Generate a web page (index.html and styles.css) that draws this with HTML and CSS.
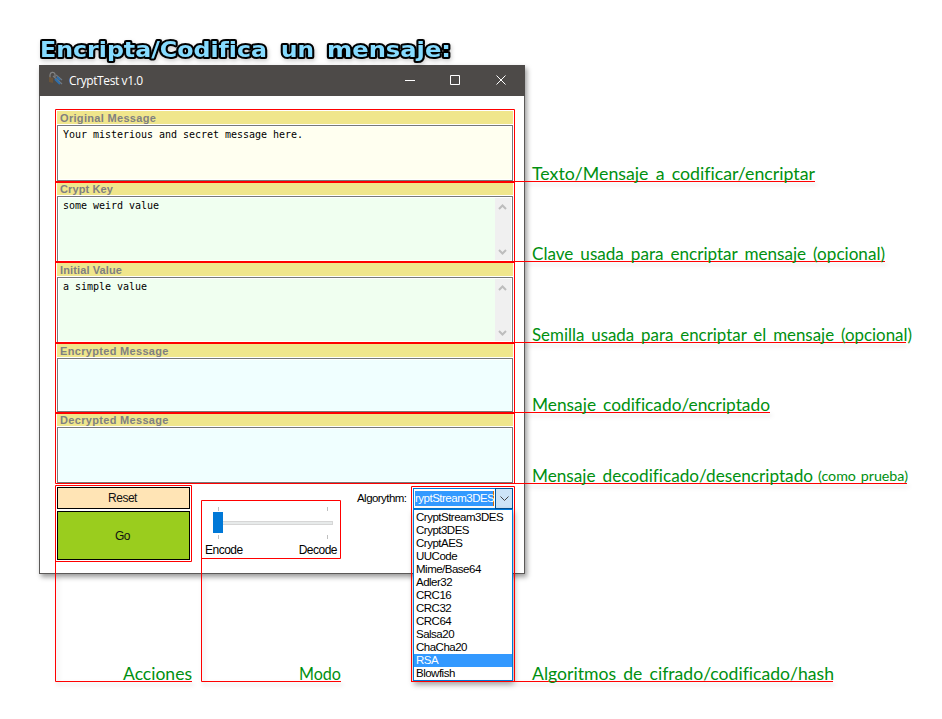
FILE: index.html
```html
<!DOCTYPE html>
<html lang="es">
<head>
<meta charset="utf-8">
<title>CryptTest v1.0</title>
<link rel="stylesheet" href="styles.css">
</head>
<body>
<main class="page">
  <h1 class="heading">
    <svg width="440" height="36" viewBox="30 33 440 36">
      <text class="heading-text" x="40" y="57" textLength="227" lengthAdjust="spacingAndGlyphs">Encripta/Codifica</text>
      <text class="heading-text" x="281" y="57" textLength="33" lengthAdjust="spacingAndGlyphs">un</text>
      <text class="heading-text" x="327" y="57" textLength="124" lengthAdjust="spacingAndGlyphs">mensaje:</text>
    </svg>
  </h1>

  <section class="window">
    <header class="titlebar">
      <svg class="app-icon" width="16" height="16" viewBox="0 0 16 16" fill="none">
        <path d="M2 7V4a2.6 2.6 0 0 1 5-1v3" stroke="#858585" stroke-width="1.2"/>
        <path d="M1 6l4 1v5l-4-1z" fill="#6b5439"/>
        <path d="M5 5l9 8M8 4l6 5" stroke="#777b80" stroke-width="1.3"/>
        <path d="M7 8l5 5M9 6l3 3" stroke="#2d6fac" stroke-width="2"/>
      </svg>
      <span class="app-name">CryptTest v1.0</span>
      <svg class="controls" width="104" height="12" viewBox="0 0 104 12" fill="none" stroke="#fff">
        <path d="M1 6.500h10M46.500 1.500h9v9h-9zM92.500 1.500l9 9M101.500 1.500l-9 9"/>
      </svg>
    </header>

    <div class="client">
      <div class="fields">
        <div class="field original"><label>Original Message</label><div class="box">Your misterious and secret message here.</div></div>
        <div class="field key"><label>Crypt Key</label><div class="box"><span>some weird value</span>
          <div class="scroll"><svg width="9" height="6"><path d="M1 5l3.500-3.500L8 5"/></svg><svg width="9" height="6"><path d="M1 1l3.500 3.500L8 1"/></svg></div></div></div>
        <div class="field initial"><label>Initial Value</label><div class="box"><span>a simple value</span>
          <div class="scroll"><svg width="9" height="6"><path d="M1 5l3.500-3.500L8 5"/></svg><svg width="9" height="6"><path d="M1 1l3.500 3.500L8 1"/></svg></div></div></div>
        <div class="field encrypted"><label>Encrypted Message</label><div class="box"></div></div>
        <div class="field decrypted"><label>Decrypted Message</label><div class="box"></div></div>
      </div>

      <div class="bottom">
        <div class="actions">
          <button class="reset">Reset</button>
          <button class="go">Go</button>
        </div>
        <div class="mode">
          <svg width="136" height="40" viewBox="0 0 136 40">
            <path d="M16.500 6v4M125.500 6v4M16.500 34v4M125.500 34v4" stroke="#c0c0c0"/>
            <rect x="11.500" y="20.500" width="119" height="3" fill="#e7eaea" stroke="#d6d6d6"/>
            <rect x="11" y="11" width="10" height="21" fill="#0078d7"/>
          </svg>
          <div class="mode-names"><span>Encode</span><span>Decode</span></div>
        </div>
        <label class="algo-label">Algorythm:</label>
        <div class="combo">
          <div class="combo-value"><span>ryptStream3DES</span></div>
          <div class="combo-arrow"><svg width="9" height="6"><path d="M.5 .5l4 4 4-4" fill="none" stroke="#444"/></svg></div>
          <ul class="options">
            <li>CryptStream3DES</li><li>Crypt3DES</li><li>CryptAES</li><li>UUCode</li><li>Mime/Base64</li><li>Adler32</li><li>CRC16</li><li>CRC32</li><li>CRC64</li><li>Salsa20</li><li>ChaCha20</li><li class="selected">RSA</li><li>Blowfish</li>
          </ul>
        </div>
      </div>
    </div>
  </section>

  <svg class="notes" width="942" height="719" viewBox="0 0 942 719">
    <g class="lines">
      <path d="M55.500 109.500H514.500V483.500H55.500zM55 181.500H525M55 182.500H514M55 261.500H525M55 262.500H514M55 342.500H525M55 343.500H514M55 412.500H525M55 413.500H514M514 483.500H525"/>
      <path d="M55.500 485.500H191.500V561.500H55.500zM55.500 561V574M201.500 500.500H340.500V558.500H201.500zM201.500 558V574"/>
      <path d="M411.500 681V486.500H514.500V681"/>
    </g>
    <g class="lines raised">
      <path d="M525 181.500H815M525 261.500H885M525 342.500H906M525 412.500H770M525 483.500H907"/>
      <path d="M55.500 574V681.500H192M201.500 574V681.500H341M411 681.500H833"/>
    </g>
    <g class="captions">
      <text x="532" y="180" textLength="283" lengthAdjust="spacingAndGlyphs">Texto/Mensaje a codificar/encriptar</text>
      <text x="532" y="260" textLength="353" lengthAdjust="spacingAndGlyphs">Clave usada para encriptar mensaje (opcional)</text>
      <text x="532" y="341" textLength="380" lengthAdjust="spacingAndGlyphs">Semilla usada para encriptar el mensaje (opcional)</text>
      <text x="532" y="411" textLength="238" lengthAdjust="spacingAndGlyphs">Mensaje codificado/encriptado</text>
      <text x="532" y="482" textLength="281" lengthAdjust="spacingAndGlyphs">Mensaje decodificado/desencriptado</text>
      <text class="small" x="818" y="481" textLength="90" lengthAdjust="spacingAndGlyphs">(como prueba)</text>
      <text x="123" y="680" textLength="69" lengthAdjust="spacingAndGlyphs">Acciones</text>
      <text x="299" y="680" textLength="42" lengthAdjust="spacingAndGlyphs">Modo</text>
      <text x="532" y="680" textLength="302" lengthAdjust="spacingAndGlyphs">Algoritmos de cifrado/codificado/hash</text>
    </g>
  </svg>
</main>
</body>
</html>
```

FILE: styles.css
```css
* { box-sizing: border-box; }
body { margin: 0; background: #fff; font-family: "Liberation Sans", Arial, sans-serif; }
.page { position: relative; width: 942px; height: 719px; overflow: hidden; padding: 33px 0 0 30px; }
.heading { margin: 0; height: 32px; }
.heading svg { display: block; filter: drop-shadow(1px 2px 2px rgba(0,0,0,.2)); }
.heading-text { font: 700 22px "DejaVu Sans", sans-serif; font-variant-ligatures: none; fill: #86dbff; stroke: #000; stroke-width: 4px; paint-order: stroke; stroke-linejoin: round; }

.window { width: 486px; height: 509px; margin-left: 9px; border: 1px solid #5b5958; border-top: 0; background: #fff; box-shadow: 2px 3px 5px rgba(0,0,0,.4); }
.titlebar { display: flex; align-items: center; height: 31px; margin: 0 -1px; padding: 0 15px 0 9px; background: #4d4a48; color: #fff; }
.app-icon { margin-top: -3px; }
.app-name { flex: 1; margin-left: 5px; font: 12px "Open Sans", sans-serif; letter-spacing: -.4px; }
.controls { margin: -2px 2px 0 0; }

.client { padding: 15px 11px 0 17px; }
.fields { width: 456px; }
.field { display: flex; flex-direction: column; gap: 1px; margin-bottom: 2px; }
.field label { height: 13px; padding-left: 3px; background: #f0e68c; color: #808080; font-size: 11px; font-weight: 700; line-height: 14px; letter-spacing: .32px; }
.field.key label, .field.initial label { letter-spacing: .12px; }
.box { display: flex; flex: 1; justify-content: space-between; border: 1px solid #77797a; padding: 2px 1px 1px 5px; box-shadow: inset 0 0 0 1px #fff; font: 10px/13px "DejaVu Sans Mono", monospace; letter-spacing: -.02px; }
.original { height: 70px; }
.original .box { background: #fffff0; }
.key { height: 78px; }
.initial { height: 79px; }
.key label, .decrypted label { height: 12px; line-height: 13px; }
.key .box, .initial .box { background: #f0fff0; border-bottom: 0; }
.encrypted { height: 68px; }
.decrypted { height: 69px; }
.encrypted .box, .decrypted .box { background: #f0ffff; }
.scroll { display: flex; flex-direction: column; justify-content: space-between; align-items: center; width: 16px; margin-top: -1px; padding: 6px 1px 5px 0; background: #f0f0f0; }
.scroll path { fill: none; stroke: #bdbdbd; stroke-width: 2; }

.bottom { display: flex; align-items: flex-start; margin-top: 2px; font-size: 12px; letter-spacing: -.5px; color: #000; }
.actions { display: flex; flex-direction: column; gap: 2px; width: 133px; margin-top: 2px; }
.actions button { display: block; padding: 0 2px 0 0; border: 1px solid #000; color: #111; font: 12px/20px "Liberation Sans", sans-serif; letter-spacing: -.5px; }
.actions .reset { height: 22px; background: #ffe4b5; }
.actions .go { height: 49px; background: #9acd1e; }
.mode { width: 136px; margin: 14px 0 0 12px; }
.mode svg { display: block; margin-top: 2px; }
.mode-names { display: flex; justify-content: space-between; padding: 3px 1px 0 3px; line-height: 13px; }
.algo-label { width: 56px; margin: 7px 0 0 19px; line-height: 13px; white-space: nowrap; font-size: 11.500px; letter-spacing: -.55px; }
.combo { position: relative; display: flex; width: 100px; height: 21px; margin-top: 3px; border: 1px solid #0078d7; background: #fff; flex-shrink: 0; }
.combo-value { width: 82px; padding: 2px 1px; overflow: hidden; }
.combo-value span { display: block; width: 79px; height: 15px; background: #3399ff; color: #fff; font-size: 11.500px; line-height: 15px; letter-spacing: -.5px; border-right: 1px solid #d66b00; white-space: nowrap; }
.combo-arrow { display: flex; flex: 1; align-items: center; justify-content: center; margin: -1px; border: 1px solid #005499; background: #cce4f7; }
.options { position: absolute; z-index: 1; top: 20px; left: -1px; width: 100px; height: 172px; margin: 0; padding: 1px 0; list-style: none; border: 1px solid #0078d7; background: #fff; box-shadow: 1px 3px 6px rgba(0,0,0,.4); }
.options li { height: 13px; padding-left: 2px; font-size: 11.500px; line-height: 13px; letter-spacing: -.5px; }
.options .selected { background: #3399ff; color: #fff; }

.notes { position: absolute; z-index: 2; inset: 0; pointer-events: none; }
.lines { fill: none; stroke: #f00; stroke-width: 1; }
.raised { filter: drop-shadow(2px 3px 2px rgba(0,0,0,.18)); }
.captions { fill: #009010; font: 400 16.500px Lato, sans-serif; font-variant-ligatures: none; word-spacing: 2.500px; }
.captions .small { font-size: 12.500px; word-spacing: 1px; }
```
